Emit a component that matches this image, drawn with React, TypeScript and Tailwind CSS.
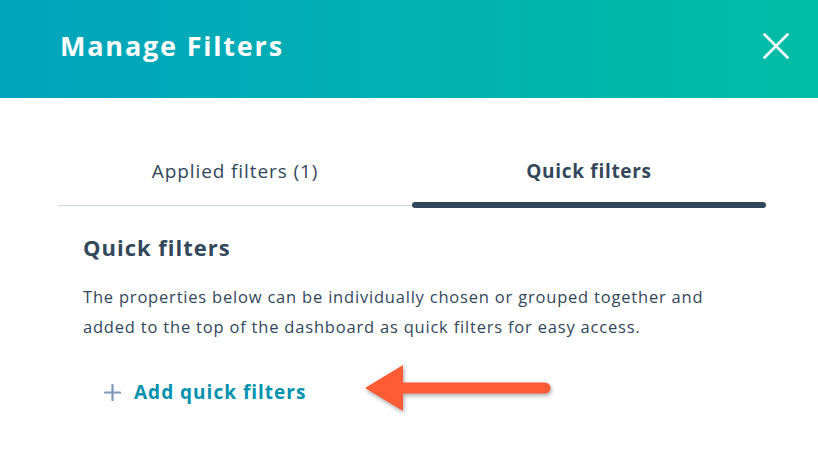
const font = { fontFamily: '"Open Sans", "Noto Sans", sans-serif' };

export default function App() {
  return (
    <div className="relative w-[818px] h-[472px] overflow-hidden bg-white text-[#33475b]" style={font}>
      {/* header */}
      <div className="h-[98px] flex items-center justify-between pl-[60px] pr-[29px] pb-[6px] bg-gradient-to-r from-[#00a4bd] to-[#00bda5]">
        <h1 className="text-[27px] font-bold text-white tracking-[1.8px]">Manage Filters</h1>
        <button className="text-white">
          <svg width="26" height="26" viewBox="0 0 26 26">
            <path d="M1.5 1.5l23 23M24.5 1.5l-23 23" stroke="currentColor" strokeWidth="2.6" strokeLinecap="round" />
          </svg>
        </button>
      </div>

      {/* tabs */}
      <div className="mt-[61px] ml-[58px] w-[708px] flex items-start">
        <div className="flex-1 flex flex-col">
          <span className="h-[24px] leading-[24px] text-center text-[19px] tracking-[0.9px]">Applied filters (1)</span>
          <div className="mt-[22px] h-px bg-[#cbd6e2]" />
        </div>
        <div className="flex-1 flex flex-col">
          <span className="h-[24px] leading-[24px] text-center text-[19px] font-bold tracking-[0.7px]">Quick filters</span>
          <div className="mt-[19px] h-[6px] rounded-full bg-[#33475b]" />
        </div>
      </div>

      {/* body */}
      <div className="pl-[83px] pr-[60px]">
        <h2 className="mt-[25px] text-[22px] font-bold leading-[28px] tracking-[1px]">Quick filters</h2>
        <p className="mt-[21px] text-[16.5px] leading-[30px] tracking-[0.8px] whitespace-nowrap">
          The properties below can be individually chosen or grouped together and
          <br />
          added to the top of the dashboard as quick filters for easy access.
        </p>
        <button className="mt-[36px] ml-[21px] flex items-center gap-[13px] text-[#0091ae]">
          <svg width="17" height="17" viewBox="0 0 17 17" className="text-[#7c98b6]">
            <path d="M8.5 1v15M1 8.5h15" stroke="currentColor" strokeWidth="2.2" strokeLinecap="round" />
          </svg>
          <span className="text-[19px] font-bold tracking-[1px]">Add quick filters</span>
        </button>
      </div>

      {/* annotation arrow */}
      <svg
        className="absolute left-[355px] top-[355px]"
        width="210"
        height="70"
        viewBox="0 0 210 70"
        style={{ filter: 'drop-shadow(1px 2px 2px rgba(0,0,0,0.35))' }}
      >
        <line x1="46" y1="33" x2="190" y2="33" stroke="#ff5c35" strokeWidth="11" strokeLinecap="round" />
        <polygon points="10,33 48,10 48,56" fill="#ff5c35" />
      </svg>
    </div>
  );
}
